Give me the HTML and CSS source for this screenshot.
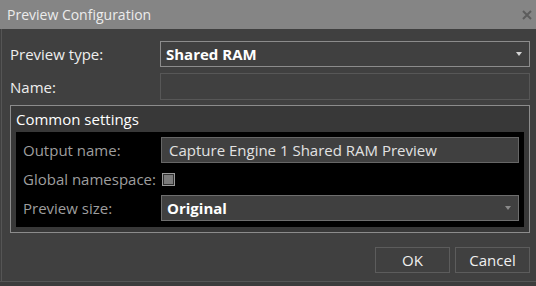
FILE: index.html
```html
<!doctype html>
<html lang="en">
  <head>
    <meta charset="UTF-8" />
    <title>Preview Configuration</title>
    <link rel="stylesheet" href="styles.css">
  </head>
  <body>
    <div class="window">
      <div class="titlebar">
        <span class="title">Preview Configuration</span>
        <svg class="close" width="10" height="10" viewBox="0 0 10 10">
          <path d="M1 1 L9 9 M9 1 L1 9" stroke="#5c5c5c" stroke-width="2" />
        </svg>
      </div>

      <div class="content">
        <div class="row">
          <label class="label">Preview type:</label>
          <div class="combo primary">
            <span>Shared RAM</span>
            <span class="arrow"></span>
          </div>
        </div>
        <div class="row row-name">
          <label class="label">Name:</label>
          <div class="textbox empty"></div>
        </div>

        <fieldset class="group">
          <div class="group-title">Common settings</div>
          <div class="group-body">
            <div class="row">
              <label class="label dim">Output name:</label>
              <div class="textbox">Capture Engine 1 Shared RAM Preview</div>
            </div>
            <div class="row">
              <label class="label dim">Global namespace:</label>
              <div class="field">
                <span class="checkbox"></span>
              </div>
            </div>
            <div class="row">
              <label class="label dim">Preview size:</label>
              <div class="combo">
                <span>Original</span>
                <span class="arrow dark"></span>
              </div>
            </div>
          </div>
        </fieldset>

        <div class="buttons">
          <button>OK</button>
          <button>Cancel</button>
        </div>
      </div>
    </div>
  </body>
</html>
```

FILE: styles.css
```css
body {
  margin: 0;
  background-color: #3c3c3c;
  font-family: 'Open Sans', 'Noto Sans', sans-serif;
  font-size: 15px;
}
.window {
  width: 536px;
  height: 282px;
  background: #404040;
  border-bottom: 1px solid #555;
  box-sizing: border-box;
  overflow: hidden;
}
.titlebar {
  height: 29px;
  background: #858585;
  display: flex;
  align-items: center;
  justify-content: space-between;
  padding: 0 4px 0 7px;
  color: #ececec;
  font-size: 14px;
}
.title {
  margin-top: -1px;
}
.content {
  padding: 12px 6px 0 8px;
  border-left: 1px solid #555;
  margin-left: 1px;
  height: 253px;
  box-sizing: border-box;
}
.row {
  display: flex;
  align-items: center;
  height: 26px;
  margin-bottom: 6px;
}
.row-name {
  height: 27px;
  margin-bottom: 5px;
}
.label {
  width: 150px;
  color: #eeeeee;
}
.label.dim {
  width: 138px;
  color: #9e9e9e;
}
.combo,
.textbox,
.field {
  flex: 1;
  height: 100%;
  box-sizing: border-box;
  display: flex;
  align-items: center;
}
.combo {
  border: 1px solid #6e6e6e;
  padding: 0 7px 0 5px;
  justify-content: space-between;
  color: #ffffff;
  font-weight: bold;
  background: #404040;
}
.combo.primary {
  border-color: #8c8c8c;
}
.arrow {
  width: 0;
  height: 0;
  border-left: 3px solid transparent;
  border-right: 3px solid transparent;
  border-top: 4px solid #d4d4d4;
}
.arrow.dark {
  border-top-color: #8a8a8a;
}
.textbox {
  border: 1px solid #666;
  background: #404040;
  color: #e2e2e2;
  padding: 0 7px;
}
.textbox.empty {
  border-color: #575757;
}
.group {
  margin: 0;
  padding: 0 5px 5px 5px;
  border: 1px solid #8c8c8c;
  background: #383838;
  min-width: 0;
}
.group-title {
  height: 26px;
  display: flex;
  align-items: center;
  color: #ffffff;
}
.group-body {
  background: #000000;
  padding: 5px 5px 6px 7px;
}
.group-body .row {
  margin-bottom: 3px;
}
.group-body .row:last-child {
  margin-bottom: 0;
}
.checkbox {
  width: 11px;
  height: 11px;
  border: 1px solid #9a9a9a;
  background: #7a7a7a;
  box-shadow: inset 0 0 0 1px #303030;
  margin-left: 1px;
}
.buttons {
  display: flex;
  justify-content: flex-end;
  gap: 5px;
  margin-top: 14px;
}
button {
  width: 75px;
  height: 26px;
  background: #404040;
  border: 1px solid #5c5c5c;
  color: #f0f0f0;
  font-family: inherit;
  font-size: 15px;
  padding: 0;
}
```
